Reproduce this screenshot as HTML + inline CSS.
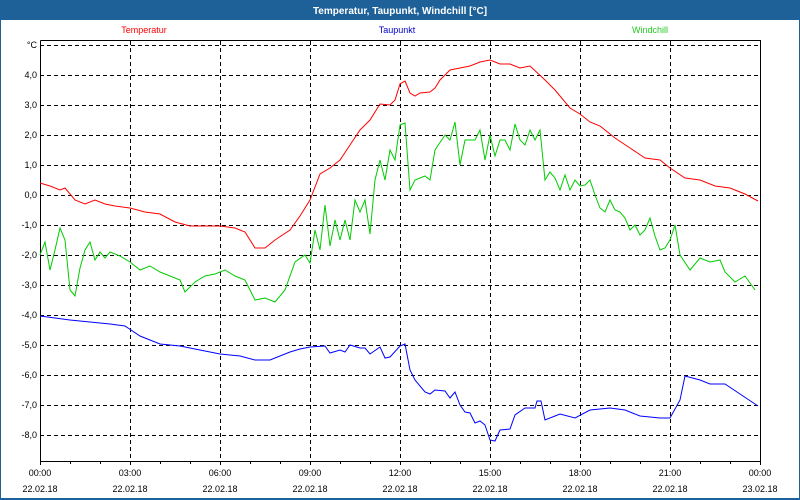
<!DOCTYPE html>
<html><head><meta charset="utf-8"><style>
html,body{margin:0;padding:0;width:800px;height:500px;overflow:hidden;background:#fff}
svg{display:block}
text{font-family:"Liberation Sans",sans-serif;font-size:9px}
</style></head><body>
<svg width="800" height="500" viewBox="0 0 800 500" xmlns="http://www.w3.org/2000/svg">
<rect x="0" y="0" width="800" height="500" fill="#fff"/>
<rect x="0" y="0" width="800" height="20" fill="#1d6198"/>
<rect x="0" y="0" width="1" height="500" fill="#1d6198"/>
<rect x="799" y="0" width="1" height="500" fill="#1d6198"/>
<rect x="0" y="498" width="800" height="2" fill="#1d6198"/>
<text x="400" y="14" text-anchor="middle" fill="#fff" font-weight="bold" style="font-size:10px">Temperatur, Taupunkt, Windchill [°C]</text>
<text x="144" y="33" text-anchor="middle" fill="#f00">Temperatur</text>
<text x="397" y="33" text-anchor="middle" fill="#00c">Taupunkt</text>
<text x="650" y="33" text-anchor="middle" fill="#2c2">Windchill</text>
<g stroke="#000" stroke-width="1" stroke-dasharray="4,3" fill="none">
<path d="M40 45.5H760M40 75.5H760M40 105.5H760M40 135.5H760M40 165.5H760M40 195.5H760M40 225.5H760M40 255.5H760M40 285.5H760M40 315.5H760M40 345.5H760M40 375.5H760M40 405.5H760M40 435.5H760"/>
<path d="M130.5 41V461M220.5 41V461M310.5 41V461M400.5 41V461M490.5 41V461M580.5 41V461M670.5 41V461"/>
</g>
<path d="M40.5 40.5H760.5V461.5M40.5 40.5V461.5H760.5" stroke="#000" fill="none"/>
<path stroke="#000" d="M40.5 461v4M70.5 461v3M100.5 461v3M130.5 461v4M160.5 461v3M190.5 461v3M220.5 461v4M250.5 461v3M280.5 461v3M310.5 461v4M340.5 461v3M370.5 461v3M400.5 461v4M430.5 461v3M460.5 461v3M490.5 461v4M520.5 461v3M550.5 461v3M580.5 461v4M610.5 461v3M640.5 461v3M670.5 461v4M700.5 461v3M730.5 461v3M760.5 461v4"/>
<g text-anchor="end" fill="#000">
<text x="37" y="48">°C</text><text x="37" y="78">4,0</text><text x="37" y="108">3,0</text><text x="37" y="138">2,0</text><text x="37" y="168">1,0</text><text x="37" y="198">0,0</text><text x="37" y="228">-1,0</text><text x="37" y="258">-2,0</text><text x="37" y="288">-3,0</text><text x="37" y="318">-4,0</text><text x="37" y="348">-5,0</text><text x="37" y="378">-6,0</text><text x="37" y="408">-7,0</text><text x="37" y="438">-8,0</text>
</g>
<g text-anchor="middle" fill="#000">
<text x="40" y="476">00:00</text><text x="130" y="476">03:00</text><text x="220" y="476">06:00</text><text x="310" y="476">09:00</text><text x="400" y="476">12:00</text><text x="490" y="476">15:00</text><text x="580" y="476">18:00</text><text x="670" y="476">21:00</text><text x="760" y="476">00:00</text>
<text x="40" y="492">22.02.18</text><text x="130" y="492">22.02.18</text><text x="220" y="492">22.02.18</text><text x="310" y="492">22.02.18</text><text x="400" y="492">22.02.18</text><text x="490" y="492">22.02.18</text><text x="580" y="492">22.02.18</text><text x="670" y="492">22.02.18</text><text x="760" y="492">23.02.18</text>
</g>
<polyline fill="none" stroke="#f00" stroke-width="1" points="40,183 50,186 60,190 65,188 75,200 85,204 95,200 105,204 115,206 130,208 145,212 160,214 175,222 190,226 205,226 220,226 235,228 245,232 255,248 265,248 275,240 290,230 300,216 310,200 320,174 330,168 340,160 350,145 360,130 370,120 380,104 390,105 395,100 400,84 405,81 410,93 415,96 420,93 430,92 435,88 440,80 450,70 460,68 470,66 480,62 490,60 500,64 510,64 520,68 530,66 545,80 555,90 570,108 580,114 590,122 600,126 615,138 630,148 645,158 660,160 670,168 685,178 700,180 715,186 730,188 745,194 758,201"/>
<polyline fill="none" stroke="#00f" stroke-width="1" points="40,316 55,318 70,320 90,322 110,324 125,326 140,336 160,344 180,346 200,350 220,354 240,356 255,360 270,360 290,352 300,349 310,347 325,346 330,353 340,350 345,352 350,345 360,348 365,348 370,354 380,347 385,358 390,357 400,346 405,344 410,370 415,380 425,392 430,394 435,390 445,391 450,398 455,392 460,405 465,412 470,413 475,423 480,421 485,425 490,440 495,441 500,430 510,429 515,415 525,408 535,408 537,401 541,401 545,420 555,416 560,414 575,418 590,410 610,408 625,410 640,416 660,418 670,418 680,400 685,376 700,380 710,384 725,384 740,394 758,406"/>
<polyline fill="none" stroke="#0c0" stroke-width="1" points="40,255 45,242 50,270 55,250 60,228 65,240 70,290 75,296 80,268 85,250 90,242 95,260 100,252 105,258 110,252 120,256 130,262 140,270 150,266 160,272 170,276 180,280 185,292 195,282 205,276 215,274 225,270 235,276 245,280 255,300 265,298 275,302 285,290 295,262 305,255 310,263 315,230 320,250 325,205 330,246 335,220 340,240 345,220 350,240 355,200 360,212 365,200 370,234 375,180 380,160 385,180 390,150 395,160 400,125 405,123 410,190 415,180 420,178 425,176 430,180 435,150 445,135 450,140 455,122 460,165 465,140 470,140 475,140 480,130 485,160 490,135 495,156 500,140 505,140 510,150 515,124 520,140 525,145 530,130 535,140 540,130 545,180 550,172 555,178 560,190 565,175 570,190 575,180 580,186 585,185 590,180 595,195 600,208 605,212 610,200 615,210 620,212 625,218 630,230 635,225 640,235 645,230 650,218 655,236 660,250 665,248 670,240 675,225 680,255 690,270 700,258 710,262 720,260 725,272 735,282 745,276 755,290"/>
</svg>
</body></html>
